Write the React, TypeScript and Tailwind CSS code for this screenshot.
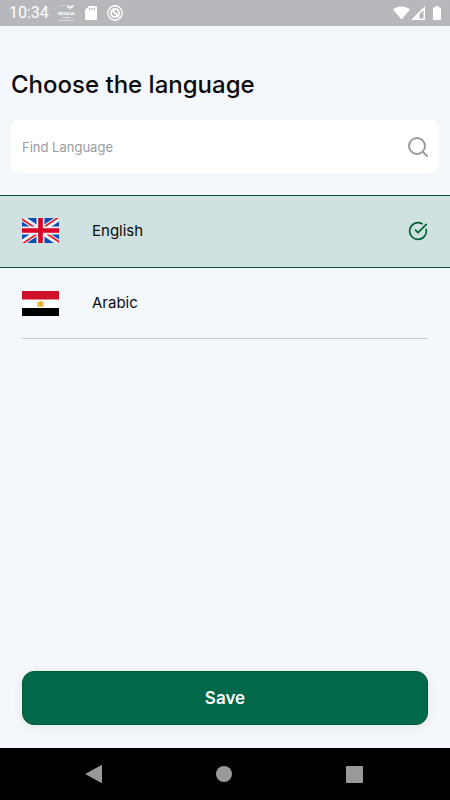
import { useState } from "react";
import { CircleCheckBig, Search } from "lucide-react";

function UkFlag() {
  return (
    <svg viewBox="0 0 37 25" className="w-[37px] h-[25px] shrink-0" aria-hidden="true">
      <clipPath id="uk-frame">
        <path d="M0 0h37v25H0z" />
      </clipPath>
      <clipPath id="uk-saltire">
        <path d="M18.5 12.5H37V25zM18.5 12.5V25H0zM18.5 12.5H0V0zM18.5 12.5V0H37z" />
      </clipPath>
      <g clipPath="url(#uk-frame)">
        <path d="M0 0h37v25H0z" fill="#0b4db3" />
        <path d="M0 0l37 25M37 0L0 25" stroke="#f3f3f3" strokeWidth="5.6" />
        <path d="M0 0l37 25M37 0L0 25" stroke="#e02035" strokeWidth="3.6" clipPath="url(#uk-saltire)" />
        <path d="M18.5 0v25M0 12.5h37" stroke="#f3f3f3" strokeWidth="8" />
        <path d="M18.5 0v25M0 12.5h37" stroke="#d80027" strokeWidth="4.6" />
      </g>
    </svg>
  );
}

function EgyptFlag() {
  return (
    <svg viewBox="0 0 37 25" className="w-[37px] h-[25px] shrink-0" aria-hidden="true">
      <path d="M0 0h37v25H0z" fill="#fff" />
      <path d="M0 0h37v8.5H0z" fill="#ce1126" />
      <path d="M0 17h37v8H0z" fill="#000" />
      <path d="M15.500 10.500l1.800.6.8-1.100h.8l.8 1.100 1.800-.6v4.700l-1 .6h-4l-1-.6z" fill="#d9a92c" />
      <path d="M17.2 12v2.6M19.8 12v2.6" stroke="#f8e7b5" strokeWidth=".7" />
    </svg>
  );
}

const languages = [
  { id: "en", name: "English", Flag: UkFlag },
  { id: "ar", name: "Arabic", Flag: EgyptFlag },
];

function StatusBar() {
  return (
    <div className="flex items-center justify-between h-[26px] px-[9px] bg-[#b6b8bb] text-white">
      <div className="flex items-center">
        <span className="w-12 text-base leading-6 font-[Roboto,sans-serif]">10:34</span>
        <svg viewBox="0 0 18 18" className="w-[18px] h-[18px]" fill="currentColor" aria-hidden="true">
          <path d="M2 1.4h8v.7H2zM2 16h15v.8H2zM5 13.2h8v1H5z" opacity=".7" />
          <path d="M10 1.6c1.8-.3 2.8.5 3 2 .3-1.8 1.5-2.600 3.600-2.300-.1 2-1.300 3-3.200 3.100v1h-.8v-1c-1.500-.2-2.500-1.100-2.600-2.800z" />
          <text x="9.5" y="11" textAnchor="middle" fontSize="4" fontWeight="900" fontFamily="Roboto, sans-serif">
            ROZALIA
          </text>
        </svg>
        <svg viewBox="0 0 12 14" className="w-3 h-[14px] ml-[10px]" aria-hidden="true">
          <path d="M4 0h7a1 1 0 0 1 1 1v12a1 1 0 0 1-1 1H1a1 1 0 0 1-1-1V4z" fill="currentColor" />
          <path d="M4.7 1.8v2.4M7 1.8v2.4M9.3 1.8v2.4" stroke="#b6b8bb" strokeWidth="1.2" />
        </svg>
        <svg viewBox="0 0 16 16" className="w-4 h-4 ml-[10px]" fill="none" stroke="currentColor" aria-hidden="true">
          <circle cx="8" cy="8" r="7.2" strokeWidth="1.4" />
          <circle cx="8" cy="8" r="4" strokeWidth="1.8" />
          <path d="M5.5 5.5l6.5 6.5" strokeWidth="1.8" />
        </svg>
      </div>
      <div className="flex items-center">
        <svg viewBox="0 0 18 14" className="w-[17px] h-[14px]" fill="currentColor" aria-hidden="true">
          <path d="M9 14L0 3.2C5-1 13-1 18 3.2z" />
        </svg>
        <svg viewBox="0 0 14 14" className="w-[14px] h-[14px] ml-px" aria-hidden="true">
          <path d="M14 0v14H0z" fill="currentColor" />
          <path d="M12.5 4v8.5h-4V8z" fill="#b6b8bb" />
        </svg>
        <svg viewBox="0 0 8 14" className="w-2 h-[14px] ml-2" fill="currentColor" aria-hidden="true">
          <path d="M2.5 0h3v1.5H8V14H0V1.5h2.5z" />
        </svg>
      </div>
    </div>
  );
}

function NavBar() {
  return (
    <nav className="flex items-center justify-around h-[52px] pl-7 pr-[30px] bg-black text-[#999]">
      <button type="button" aria-label="Back">
        <svg viewBox="0 0 18 18" className="w-[18px] h-[18px]" fill="currentColor" aria-hidden="true">
          <path d="M17 .5v17a.6.6 0 0 1-1 .3L1 9.6a.7.7 0 0 1 0-1.2L16 .2a.6.6 0 0 1 1 .3z" />
        </svg>
      </button>
      <button type="button" aria-label="Home" className="w-4 h-4 rounded-full bg-[#999]" />
      <button type="button" aria-label="Recent apps" className="w-[17px] h-[17px] rounded-[1px] bg-[#999]" />
    </nav>
  );
}

export default function App() {
  const [selected, setSelected] = useState("en");
  const [query, setQuery] = useState("");

  const visible = languages.filter(({ name }) =>
    name.toLowerCase().includes(query.trim().toLowerCase())
  );

  return (
    <div className="flex flex-col min-h-screen bg-[#f4f7fc] text-[#0b0b0b] font-[Inter,sans-serif]">
      <StatusBar />

      <main className="flex flex-col flex-1">
        <h1 className="mt-[43px] px-[11px] text-2xl leading-8 font-medium">Choose the language</h1>

        {/* Search */}
        <label className="flex items-center h-[53px] mt-[19px] mx-[11px] pl-[11px] pr-[9px] rounded-lg bg-white text-[#999b9f]">
          <input
            type="text"
            aria-label="Find Language"
            placeholder="Find Language"
            value={query}
            onChange={(e) => setQuery(e.target.value)}
            className="flex-1 min-w-0 text-[13px] leading-5 text-[#0b0b0b] placeholder:text-[#999b9f] outline-none"
          />
          <Search size={24} strokeWidth={2} aria-hidden="true" />
        </label>

        {/* Languages */}
        <div role="radiogroup" aria-label="Language" className="mt-[22px]">
          {visible.map(({ id, name, Flag }) => {
            const active = id === selected;
            return (
              <label
                key={id}
                className={
                  active
                    ? "relative flex items-center h-[73px] px-[22px] pb-0.5 border-y border-[#06512f] bg-[#cfe1e1] cursor-pointer"
                    : "relative flex items-center h-[71px] mx-[22px] border-b border-[#c6c9cf] cursor-pointer"
                }
              >
                <input
                  type="radio"
                  name="language"
                  value={id}
                  checked={active}
                  onChange={() => setSelected(id)}
                  className="sr-only"
                />
                <Flag />
                <span className="flex-1 ml-[33px] text-[15px] leading-5">{name}</span>
                {active && <CircleCheckBig size={20} strokeWidth={2} className="text-[#005f35]" aria-hidden="true" />}
              </label>
            );
          })}
        </div>

        <button
          type="button"
          className="h-[54px] mt-auto mx-[22px] mb-[23px] rounded-xl border border-[#045a2c] bg-[#00694b] text-white text-[17px] leading-6 font-semibold shadow-[0_2px_12px_rgba(0,0,0,0.08)]"
        >
          Save
        </button>
      </main>

      <NavBar />
    </div>
  );
}
